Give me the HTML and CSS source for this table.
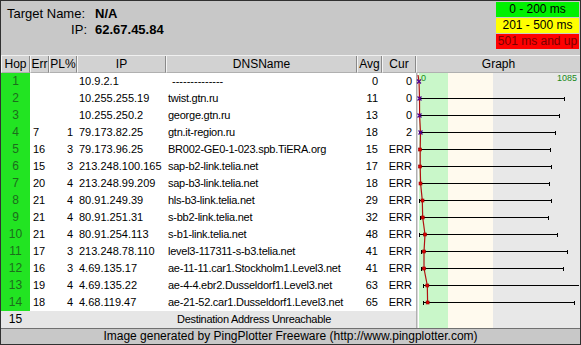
FILE: index.html
```html
<!DOCTYPE html>
<html>
<head>
<meta charset="utf-8">
<link rel="stylesheet" href="styles.css">
</head>
<body>
<div class="frame">
  <div class="top">
    <div class="target">
      <span class="lbl first">Target Name:</span><span class="val">N/A</span>
      <span class="lbl">IP:</span><span class="val">62.67.45.84</span>
    </div>
    <div class="legend">
      <div class="lg green">0 - 200 ms</div>
      <div class="lg yellow">201 - 500 ms</div>
      <div class="lg red">501 ms and up</div>
    </div>
  </div>
  <div class="table">
    <div class="th">Hop</div><div class="th">Err</div><div class="th">PL%</div><div class="th">IP</div><div class="th">DNSName</div><div class="th">Avg</div><div class="th">Cur</div><div class="th last">Graph</div>

    <div class="graph">
      <svg width="163" height="255" viewBox="0 0 163 255">
        <text x="5" y="8" class="glabel">0</text>
        <text x="161" y="8" class="glabel" text-anchor="end">1085</text>
        <g stroke="#000" stroke-width="1" shape-rendering="crispEdges">
          <line x1="3" y1="25.5" x2="148" y2="25.5"/><line x1="148" y1="24" x2="148" y2="28"/>
          <line x1="3" y1="42.5" x2="143" y2="42.5"/><line x1="143" y1="41" x2="143" y2="45"/>
          <line x1="3" y1="59.5" x2="139" y2="59.5"/><line x1="139" y1="58" x2="139" y2="62"/>
          <line x1="4" y1="76.5" x2="134" y2="76.5"/><line x1="134" y1="75" x2="134" y2="79"/>
          <line x1="4" y1="93.5" x2="135" y2="93.5"/><line x1="135" y1="92" x2="135" y2="96"/>
          <line x1="4" y1="110.5" x2="133" y2="110.5"/><line x1="133" y1="109" x2="133" y2="113"/>
          <line x1="3" y1="127.5" x2="135" y2="127.5"/><line x1="3" y1="126" x2="3" y2="130"/><line x1="135" y1="126" x2="135" y2="130"/>
          <line x1="4" y1="144.5" x2="132" y2="144.5"/><line x1="4" y1="143" x2="4" y2="147"/><line x1="132" y1="143" x2="132" y2="147"/>
          <line x1="3" y1="161.5" x2="141" y2="161.5"/><line x1="3" y1="160" x2="3" y2="164"/><line x1="141" y1="160" x2="141" y2="164"/>
          <line x1="5" y1="178.5" x2="151" y2="178.5"/><line x1="5" y1="177" x2="5" y2="181"/><line x1="151" y1="177" x2="151" y2="181"/>
          <line x1="5" y1="195.5" x2="147" y2="195.5"/><line x1="5" y1="194" x2="5" y2="198"/><line x1="147" y1="194" x2="147" y2="198"/>
          <line x1="7" y1="212.5" x2="163" y2="212.5"/><line x1="7" y1="211" x2="7" y2="215"/>
          <line x1="7" y1="229.5" x2="158" y2="229.5"/><line x1="7" y1="228" x2="7" y2="232"/><line x1="158" y1="228" x2="158" y2="232"/>
        </g>
        <polyline fill="none" stroke="#b01010" stroke-width="1.2" points="2,2 3,8.5 3.5,25.5 3.6,42.5 4.5,59.5 4.2,76.5 4.2,93.5 4.6,110.5 6.3,127.5 6.7,144.5 9,161.5 8,178.5 8,195.5 11.3,212.5 11.6,229.5"/>
        <g stroke="#500090" stroke-width="1.2">
          <path d="M1 6.5 L5 10.5 M5 6.5 L1 10.5"/>
          <path d="M1.5 23.5 L5.5 27.5 M5.5 23.5 L1.5 27.5"/>
          <path d="M1.5 40.5 L5.5 44.5 M5.5 40.5 L1.5 44.5"/>
          <path d="M2.5 57.5 L6.5 61.5 M6.5 57.5 L2.5 61.5"/>
        </g>
        <g fill="#e00000" stroke="#900000" stroke-width="0.6">
          <rect x="2.5" y="75" width="3" height="3"/>
          <rect x="2.5" y="92" width="3" height="3"/>
          <rect x="3" y="109" width="3" height="3"/>
          <rect x="5" y="126" width="3" height="3"/>
          <rect x="5.2" y="143" width="3" height="3"/>
          <rect x="7.5" y="160" width="3" height="3"/>
          <rect x="6.5" y="177" width="3" height="3"/>
          <rect x="6.5" y="194" width="3" height="3"/>
          <rect x="9.8" y="211" width="3" height="3"/>
          <rect x="10.1" y="228" width="3" height="3"/>
        </g>
      </svg>
    </div>

    <div class="hop">1</div><div></div><div class="r"></div><div class="l">10.9.2.1</div><div class="l dns dash">--------------</div><div class="r">0</div><div class="r">0</div>
    <div class="hop">2</div><div></div><div class="r"></div><div class="l">10.255.255.19</div><div class="l dns">twist.gtn.ru</div><div class="r">11</div><div class="r">0</div>
    <div class="hop">3</div><div></div><div class="r"></div><div class="l">10.255.250.2</div><div class="l dns">george.gtn.ru</div><div class="r">13</div><div class="r">0</div>
    <div class="hop">4</div><div class="e">7</div><div class="r">1</div><div class="l">79.173.82.25</div><div class="l dns">gtn.it-region.ru</div><div class="r">18</div><div class="r">2</div>
    <div class="hop">5</div><div class="e">16</div><div class="r">3</div><div class="l">79.173.96.25</div><div class="l dns">BR002-GE0-1-023.spb.TiERA.org</div><div class="r">15</div><div class="r">ERR</div>
    <div class="hop">6</div><div class="e">15</div><div class="r">3</div><div class="l">213.248.100.165</div><div class="l dns">sap-b2-link.telia.net</div><div class="r">17</div><div class="r">ERR</div>
    <div class="hop">7</div><div class="e">20</div><div class="r">4</div><div class="l">213.248.99.209</div><div class="l dns">sap-b3-link.telia.net</div><div class="r">18</div><div class="r">ERR</div>
    <div class="hop">8</div><div class="e">21</div><div class="r">4</div><div class="l">80.91.249.39</div><div class="l dns">hls-b3-link.telia.net</div><div class="r">29</div><div class="r">ERR</div>
    <div class="hop">9</div><div class="e">21</div><div class="r">4</div><div class="l">80.91.251.31</div><div class="l dns">s-bb2-link.telia.net</div><div class="r">32</div><div class="r">ERR</div>
    <div class="hop">10</div><div class="e">21</div><div class="r">4</div><div class="l">80.91.254.113</div><div class="l dns">s-b1-link.telia.net</div><div class="r">48</div><div class="r">ERR</div>
    <div class="hop">11</div><div class="e">17</div><div class="r">3</div><div class="l">213.248.78.110</div><div class="l dns">level3-117311-s-b3.telia.net</div><div class="r">41</div><div class="r">ERR</div>
    <div class="hop">12</div><div class="e">16</div><div class="r">3</div><div class="l">4.69.135.17</div><div class="l dns">ae-11-11.car1.Stockholm1.Level3.net</div><div class="r">41</div><div class="r">ERR</div>
    <div class="hop">13</div><div class="e">19</div><div class="r">4</div><div class="l">4.69.135.22</div><div class="l dns">ae-4-4.ebr2.Dusseldorf1.Level3.net</div><div class="r">63</div><div class="r">ERR</div>
    <div class="hop">14</div><div class="e">18</div><div class="r">4</div><div class="l">4.68.119.47</div><div class="l dns">ae-21-52.car1.Dusseldorf1.Level3.net</div><div class="r">65</div><div class="r">ERR</div>
    <div class="hop end">15</div><div class="end"></div><div class="end"></div><div class="end"></div><div class="end unreach">Destination Address Unreachable</div><div class="end"></div><div class="end"></div>
  </div>
  <div class="footer">Image generated by PingPlotter Freeware (http://www.pingplotter.com)</div>
</div>
</body>
</html>
```
FILE: styles.css
```css
* { box-sizing: border-box; }
body {
  margin: 0;
  font-family: "Liberation Sans", Arial, sans-serif;
  font-size: 11px;
  color: #000;
  background: #fff;
}
.frame {
  width: 581px;
  height: 345px;
  border: 1px solid #303030;
  background: #c8c8c8;
  display: flex;
  flex-direction: column;
}
.top {
  height: 55px;
  display: flex;
  justify-content: space-between;
  border-bottom: 1px solid #f0f0f0;
}
.target {
  display: grid;
  grid-template-columns: 80px auto;
  grid-auto-rows: 16px;
  column-gap: 8px;
  padding: 5px 0 0 6px;
  font-size: 13px;
  line-height: 16px;
}
.lbl { text-align: right; }
.lbl.first { text-align: left; }
.val { font-weight: bold; }
.legend {
  width: 83px;
  margin: 1px 1px 0 0;
  display: flex;
  flex-direction: column;
  gap: 1px;
}
.lg {
  height: 15px;
  line-height: 15px;
  text-align: center;
  font-size: 12px;
}
.green { background: #00f000; }
.yellow { background: #ffff00; }
.red { background: #ff0000; color: #7a0000; }
.table {
  display: grid;
  grid-template-columns: 29px 19px 28px 89px 191px 25px 34px 1fr;
  grid-template-rows: 17px;
  grid-auto-rows: 17px;
  background: #fff;
  line-height: 17px;
  white-space: nowrap;
}
.th {
  background: #d2d2d2;
  text-align: center;
  line-height: 16px;
  font-size: 12px;
  border-right: 1px solid #8a8a8a;
  border-left: 1px solid #f4f4f4;
  border-bottom: 1px solid #b0b0b0;
}
.th.last { border-right: none; }
.hop {
  background: #22e422;
  color: #1d6d1d;
  text-align: center;
  font-size: 12px;
}
.e { padding-left: 3px; }
.r { text-align: right; padding-right: 4px; }
.l { padding-left: 2px; overflow: visible; }
.dns { letter-spacing: -0.25px; }
.dash { padding-left: 6px; letter-spacing: 0; }
.end { background: #e6e6e6; }
.hop.end { color: #000; }
.unreach { padding-left: 11px; letter-spacing: -0.3px; }
.graph {
  grid-column: 8;
  grid-row: 2 / span 15;
  background: linear-gradient(to right, #d8d8d8 0 1px, #fff 1px 2px, #c9f7c9 2px 31px, #fffaee 31px 76px, #e8e8e8 76px);
  border-left: 1px solid #b0b0b0;
}
.graph svg { display: block; margin-left: -1px; }
.glabel { fill: #1a8a1a; font-size: 9px; font-family: "Liberation Sans", Arial, sans-serif; }
.footer {
  flex: 1;
  border-top: 1px solid #707070;
  text-align: center;
  font-size: 12px;
  line-height: 15px;
  background: #c8c8c8;
}
```
